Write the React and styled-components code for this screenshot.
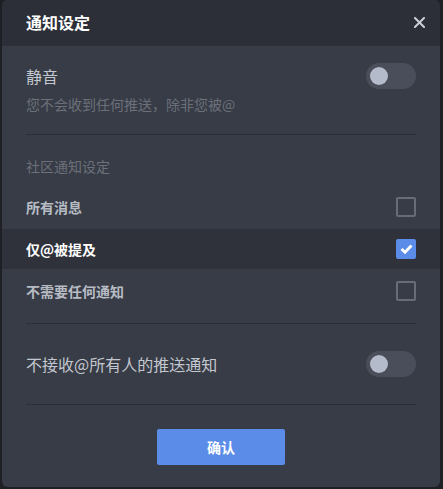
import { useState } from "react";
import styled, { createGlobalStyle } from "styled-components";

const HEADER = "#2c2f38";
const BODY = "#383c46";
const LINE = "#2b2e36";
const MUTED = "#6b707a";
const BLUE = "#5b8de8";

const GlobalStyle = createGlobalStyle`
  html, body {
    margin: 0;
    padding: 0;
    background: #1e2026;
    font-family: "Noto Sans CJK SC", "Noto Sans", sans-serif;
  }
`;

const Modal = styled.div`
  width: 438px;
  height: 487px;
  margin-left: 2px;
  background: ${BODY};
  border-radius: 6px;
  overflow: hidden;
  display: flex;
  flex-direction: column;
`;

const Header = styled.div`
  height: 46px;
  flex: 0 0 46px;
  background: ${HEADER};
  display: flex;
  align-items: center;
  justify-content: space-between;
  padding: 0 15px 0 24px;
`;

const Title = styled.div`
  font-size: 16px;
  font-weight: 700;
  color: #fff;
  line-height: 20px;
  margin-top: -2px;
`;

const Close = styled.button`
  width: 11px;
  height: 11px;
  padding: 0;
  border: 0;
  background: none;
  cursor: pointer;
  display: flex;
  align-items: center;
  justify-content: center;
  margin-top: -2px;
`;

const Body = styled.div`
  padding: 17px 24px 0;
  display: flex;
  flex-direction: column;
`;

const SwitchRow = styled.div`
  height: 26px;
  display: flex;
  align-items: center;
  justify-content: space-between;
`;

const SwitchLabel = styled.div`
  font-size: 16px;
  color: #c3c7cf;
  line-height: 20px;
`;

const Hint = styled.div`
  margin-top: 5px;
  font-size: 14px;
  line-height: 20px;
  color: ${MUTED};
`;

const Divider = styled.div`
  height: 1px;
  background: ${LINE};
  margin: ${(p) => p.$m || "0"};
`;

const SectionLabel = styled.div`
  margin-top: 21px;
  font-size: 14px;
  line-height: 20px;
  color: ${MUTED};
  margin-bottom: 11px;
`;

const Options = styled.div`
  display: flex;
  flex-direction: column;
  gap: 2px;
  margin: 0 -24px;
`;

const Option = styled.div`
  height: 40px;
  padding: 0 24px;
  display: flex;
  align-items: center;
  justify-content: space-between;
  background: ${(p) => (p.$active ? "#2f323b" : "transparent")};
  cursor: pointer;
`;

const OptionText = styled.div`
  font-size: 14px;
  font-weight: 700;
  color: ${(p) => (p.$active ? "#fff" : "#b6bbc4")};
`;

const Check = styled.div`
  width: 20px;
  height: 20px;
  box-sizing: border-box;
  border-radius: 2px;
  border: 2px solid ${(p) => (p.$on ? BLUE : "#676c77")};
  background: ${(p) => (p.$on ? BLUE : "transparent")};
  display: flex;
  align-items: center;
  justify-content: center;
`;

const Track = styled.div`
  width: 50px;
  height: 26px;
  box-sizing: border-box;
  border-radius: 13px;
  background: ${(p) => (p.$on ? BLUE : "#4a4e5a")};
  padding: 4px;
  display: flex;
  justify-content: ${(p) => (p.$on ? "flex-end" : "flex-start")};
  cursor: pointer;
`;

const Knob = styled.div`
  width: 18px;
  height: 18px;
  border-radius: 50%;
  background: #b4bccb;
`;

const Footer = styled.div`
  display: flex;
  justify-content: center;
  padding-top: 24px;
`;

const Confirm = styled.button`
  width: 128px;
  height: 36px;
  border: 0;
  border-radius: 2px;
  background: ${BLUE};
  color: #fff;
  font-family: inherit;
  font-size: 14px;
  font-weight: 700;
  cursor: pointer;
`;

const OPTIONS = ["所有消息", "仅@被提及", "不需要任何通知"];

function Switch({ on, onClick }) {
  return (
    <Track $on={on} onClick={onClick}>
      <Knob />
    </Track>
  );
}

export default function App() {
  const [mute, setMute] = useState(false);
  const [everyone, setEveryone] = useState(false);
  const [choice, setChoice] = useState(1);

  return (
    <>
      <GlobalStyle />
      <Modal>
        <Header>
          <Title>通知设定</Title>
          <Close aria-label="close">
            <svg width="11" height="11" viewBox="0 0 11 11">
              <path d="M1 1L10 10M10 1L1 10" stroke="#c9ced7" strokeWidth="2" strokeLinecap="square" />
            </svg>
          </Close>
        </Header>
        <Body>
          <SwitchRow>
            <SwitchLabel>静音</SwitchLabel>
            <Switch on={mute} onClick={() => setMute(!mute)} />
          </SwitchRow>
          <Hint>您不会收到任何推送，除非您被@</Hint>
          <Divider $m="20px 0 0" />
          <SectionLabel>社区通知设定</SectionLabel>
          <Options>
            {OPTIONS.map((label, i) => (
              <Option key={label} $active={choice === i} onClick={() => setChoice(i)}>
                <OptionText $active={choice === i}>{label}</OptionText>
                <Check $on={choice === i}>
                  {choice === i && (
                    <svg width="13" height="10" viewBox="0 0 13 10">
                      <path d="M1.5 5L5 8.3L11.5 1.5" fill="none" stroke="#fff" strokeWidth="2.8" />
                    </svg>
                  )}
                </Check>
              </Option>
            ))}
          </Options>
          <Divider $m="12px 0 27px" />
          <SwitchRow>
            <SwitchLabel>不接收@所有人的推送通知</SwitchLabel>
            <Switch on={everyone} onClick={() => setEveryone(!everyone)} />
          </SwitchRow>
          <Divider $m="27px 0 0" />
          <Footer>
            <Confirm>确认</Confirm>
          </Footer>
        </Body>
      </Modal>
    </>
  );
}
